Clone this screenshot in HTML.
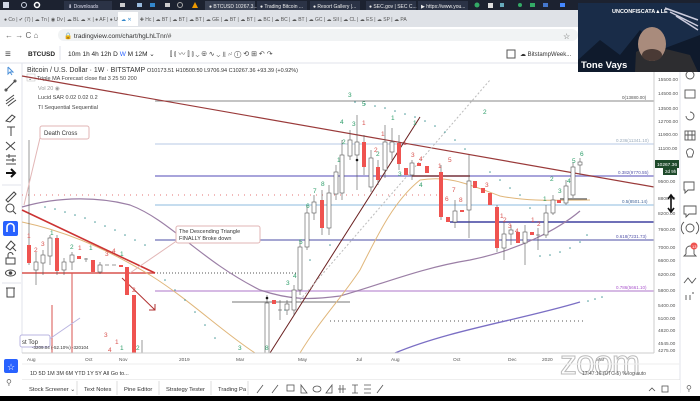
<!DOCTYPE html>
<html><head><meta charset="utf-8"><style>
html,body{margin:0;padding:0;width:700px;height:401px;overflow:hidden;background:#fff;font-family:"Liberation Sans",sans-serif}
svg{display:block}
text{font-family:"Liberation Sans",sans-serif}
</style></head><body>
<svg width="700" height="401" viewBox="0 0 700 401" xmlns="http://www.w3.org/2000/svg">
<!-- taskbar -->
<rect x="0" y="0" width="700" height="10" fill="#1c2230"/>
<rect x="3" y="2" width="6" height="6" fill="#cfd6e4"/>
<circle cx="24" cy="5" r="2.5" fill="none" stroke="#cfd6e4"/>
<circle cx="37" cy="5" r="2.5" fill="none" stroke="#fff" stroke-width="1.5"/>
<rect x="64" y="1" width="48" height="9" fill="#2b3346"/><text x="68" y="8" font-size="5" fill="#dde">⬇ Downloads</text>
<rect x="120" y="3" width="5" height="4" fill="#ccc"/><rect x="137" y="3" width="5" height="4" fill="#9bd"/><rect x="150" y="3" width="5" height="4" fill="#38c"/><rect x="165" y="3" width="5" height="4" fill="#ccc"/><circle cx="180" cy="5" r="2.5" fill="none" stroke="#aaa"/><path d="M192 8 L195 2 L198 8Z" fill="#e90"/>
<rect x="205" y="1" width="50" height="9" fill="#3a4254"/><text x="209" y="8" font-size="5" fill="#eee">● BTCUSD 10267.3...</text>
<rect x="257" y="1" width="50" height="9" fill="#2b3346"/><text x="260" y="8" font-size="5" fill="#eee">● Trading Bitcoin ...</text>
<rect x="310" y="1" width="50" height="9" fill="#2b3346"/><text x="313" y="8" font-size="5" fill="#eee">● Resort Gallery |...</text>
<rect x="366" y="1" width="50" height="9" fill="#2b3346"/><text x="369" y="8" font-size="5" fill="#eee">● SEC.gov | SEC C...</text>
<rect x="418" y="1" width="50" height="9" fill="#2b3346"/><text x="421" y="8" font-size="5" fill="#eee">▶ https://www.you...</text>
<circle cx="477" cy="5" r="2.5" fill="#3a6"/><rect x="488" y="3" width="5" height="5" fill="#ddd"/><rect x="500" y="3" width="4" height="4" fill="#6ab"/><circle cx="520" cy="5" r="2" fill="#3a6"/><rect x="530" y="3" width="5" height="4" fill="#3a6"/><rect x="543" y="3" width="5" height="4" fill="#47c"/><rect x="560" y="3" width="5" height="4" fill="#48f"/>
<!-- tab bar -->
<rect x="0" y="10" width="700" height="17" fill="#dfe2e7"/>
<g font-size="5" fill="#555">
<text x="4" y="21">● Co | ✔ (7) | ☁ Tn | ◉ Dv | ☁ BL  ☁ ✕ | ● AF | ● Un | ◢ Th | ✚ Hc | ☁ BT | ☁ BT | ☁ BT | ☁ GE | ☁ BT | ☁ BT | ☁ BC | ☁ BC | ☁ BT | ☁ GC | ☁ SII | ☁ CL | ☁ ES | ☁ SP | ☁ PA</text>
</g>
<rect x="118" y="12" width="20" height="14" fill="#fff"/><text x="121" y="21" font-size="5" fill="#38c">☁ ✕</text>
<!-- address bar -->
<rect x="0" y="27" width="700" height="16" fill="#fff"/>
<text x="5" y="38" font-size="8" fill="#666">←  →  C  ⌂</text>
<rect x="58" y="29" width="520" height="12" rx="6" fill="#f1f3f4"/>
<text x="64" y="38" font-size="6.5" fill="#333">🔒 tradingview.com/chart/hgLhLTnr/#</text>
<text x="563" y="39" font-size="8" fill="#555">☆</text>
<!-- TV toolbar -->
<rect x="0" y="43" width="700" height="20" fill="#fff"/>
<line x1="0" y1="63" x2="700" y2="63" stroke="#e0e3eb"/>
<text x="5" y="57" font-size="10" fill="#444">≡</text>
<text x="28" y="56" font-size="6.5" font-weight="bold" fill="#222">BTCUSD</text>
<line x1="60" y1="46" x2="60" y2="60" stroke="#e0e3eb"/>
<text x="68" y="56" font-size="6.5" fill="#222">10m  1h  4h  12h  D  <tspan fill="#2962ff">W</tspan>  M  12M  ⌄</text>
<text x="170" y="56" font-size="7" fill="#444">⫿  ⫾  〰  ⫿  ⫾ ⌄  ⊕  ∿ ⌄  ⫫  ⩫  ⓘ  ⟲  ⊞  ↶ ↷</text>
<rect x="507" y="50" width="8" height="8" fill="none" stroke="#555"/>
<text x="520" y="56" font-size="6" fill="#333">☁ BitstampWeek...</text>
<!-- left toolbar -->
<line x1="22" y1="63" x2="22" y2="353" stroke="#e0e3eb"/>
<g fill="none" stroke="#444" stroke-width="1">
<path d="M8 67 L8 74 L10 72 L12 75 M8 67 L13 72 L10 72" stroke="#4a8fd8"/>
<path d="M6 90 L15 81"/><circle cx="6" cy="90" r="1"/><circle cx="15" cy="81" r="1"/>
<path d="M6 104 L14 98 M6 101 L14 95 M8 106 L16 100"/>
<path d="M6 121 L12 115 L15 117 L10 122Z"/>
<path d="M7 127 L15 127 M11 127 L11 136"/>
<path d="M6 142 L15 150 M6 150 L15 142"/>
<path d="M6 156 L16 156 M6 160 L16 160 M6 164 L16 164 M9 154 L9 158 M13 158 L13 162"/>
<path d="M6 173 L15 173 M11 169 L15 173 L11 177" stroke="#111" stroke-width="2"/>
<line x1="2" y1="185" x2="21" y2="185" stroke="#e0e3eb"/>
<path d="M6 200 L14 192 L16 194 L8 202Z"/>
<circle cx="10" cy="208" r="4"/><path d="M13 211 L16 214"/>
</g>
<rect x="3" y="221" width="15" height="15" rx="2" fill="#2962ff"/>
<path d="M7 232 L7 227 A3.5 3.5 0 0 1 14 227 L14 232" fill="none" stroke="#fff" stroke-width="1.6"/>
<g fill="none" stroke="#444">
<path d="M6 247 L11 241 L15 245 L10 250Z M12 247 L16 251"/>
<rect x="6" y="258" width="9" height="6"/><path d="M8 258 L8 255 A2.5 2.5 0 0 1 13 255"/>
<ellipse cx="10.5" cy="273" rx="5" ry="3"/><circle cx="10.5" cy="273" r="1.3" fill="#444"/>
<line x1="2" y1="283" x2="21" y2="283" stroke="#e0e3eb"/>
<rect x="7" y="288" width="7" height="9"/><path d="M6 288 L15 288"/>
</g>
<!-- chart header -->
<text x="27" y="72" font-size="7" fill="#333">Bitcoin / U.S. Dollar · 1W · BITSTAMP  <tspan font-size="5.5">O10173.51  H10500.50  L9706.94  C10267.36  +93.39 (+0.92%)</tspan></text>
<rect x="27" y="74" width="8" height="7" fill="#fff" stroke="#bbb" stroke-width=".5"/>
<text x="28" y="80" font-size="5" fill="#444">⌄</text>
<text x="37" y="80" font-size="5.5" fill="#444">Triple MA Forecast close flat 3 25 50 200</text>
<text x="38" y="90" font-size="5.5" fill="#999">Vol 20  ◉</text>
<text x="38" y="99" font-size="5.5" fill="#444">Lucid SAR 0.02 0.02 0.2</text>
<text x="38" y="109" font-size="5.5" fill="#444">TI Sequential Sequential</text>
<!-- horizontal levels -->
<line x1="155" y1="101" x2="654" y2="101" stroke="#888" stroke-width="1"/>
<text x="622" y="99" font-size="4.5" fill="#555">0(13880.00)</text>
<line x1="155" y1="144" x2="654" y2="144" stroke="#b7c9e6" stroke-width="1"/>
<text x="616" y="142" font-size="4.5" fill="#9ab">0.236(11341.10)</text>
<line x1="155" y1="176" x2="654" y2="176" stroke="#8c86cf" stroke-width="1.5"/>
<text x="618" y="174" font-size="4.5" fill="#55a">0.382(9770.55)</text>
<line x1="155" y1="205" x2="654" y2="205" stroke="#8cbbdf" stroke-width="1"/>
<text x="622" y="203" font-size="4.5" fill="#469">0.5(8501.14)</text>
<line x1="450" y1="222" x2="654" y2="222" stroke="#6f70b8" stroke-width="2"/>
<line x1="155" y1="240" x2="654" y2="240" stroke="#6f70b8" stroke-width="1.2"/>
<text x="616" y="238" font-size="4.5" fill="#55a">0.618(7231.73)</text>
<line x1="155" y1="291" x2="654" y2="291" stroke="#c9a3db" stroke-width="1.5"/>
<text x="616" y="289" font-size="4.5" fill="#a5c">0.786(5661.10)</text>
<line x1="22" y1="195" x2="440" y2="195" stroke="#e57373" stroke-dasharray="1 5"/>
<line x1="22" y1="273" x2="300" y2="273" stroke="#555" stroke-dasharray="1 2"/>
<line x1="22" y1="273" x2="155" y2="273" stroke="#d9534f" stroke-width="1.5"/>
<line x1="330" y1="321" x2="585" y2="321" stroke="#555" stroke-dasharray="1 3"/>
<line x1="232" y1="302" x2="350" y2="302" stroke="#777"/>
<line x1="412" y1="176" x2="470" y2="176" stroke="#8a4444" stroke-width="1.5"/>
<line x1="560" y1="199" x2="587" y2="199" stroke="#555" stroke-width="1.2"/>
<!-- moving averages -->
<path d="M22 207 C60 196 100 197 130 205 C170 220 200 260 260 290 C290 300 310 300 340 296 C380 285 420 268 470 260 C520 250 560 228 580 211" fill="none" stroke="#9b7fa6" stroke-width="1.2"/>
<path d="M22 222 C60 230 100 245 150 275 C190 300 220 330 255 353" fill="none" stroke="#e0b67a" stroke-width="1"/>
<path d="M300 353 C320 320 340 300 360 270 C380 230 395 200 420 180 C450 175 470 185 500 196 C530 202 560 200 590 200" fill="none" stroke="#e0b67a" stroke-width="1"/>
<path d="M395 353 C450 330 520 320 580 302" fill="none" stroke="#7b6fc4" stroke-width="1.3"/>
<!-- trendlines -->
<line x1="22" y1="76" x2="654" y2="187" stroke="#9a3a3a" stroke-width="1.2"/>
<line x1="22" y1="210" x2="155" y2="273" stroke="#cc3333" stroke-width="1.6"/>
<line x1="270" y1="353" x2="420" y2="117" stroke="#6a2020" stroke-width="1"/>
<line x1="300" y1="300" x2="490" y2="80" stroke="#bbb" stroke-dasharray="2 2"/>
<line x1="122" y1="278" x2="155" y2="310" stroke="#b03030" stroke-width="1"/>
<path d="M149 310 L155 310 L155 304" fill="none" stroke="#b03030"/>
<line x1="72" y1="273" x2="72" y2="353" stroke="#d9534f"/>
<line x1="52" y1="305" x2="52" y2="353" stroke="#d9534f"/>
<!-- SAR dots -->
<g fill="#4a9a9a">
<circle cx="45" cy="207" r=".8"/><circle cx="55" cy="209" r=".8"/><circle cx="65" cy="212" r=".8"/><circle cx="75" cy="215" r=".8"/><circle cx="85" cy="218" r=".8"/><circle cx="95" cy="222" r=".8"/><circle cx="105" cy="226" r=".8"/><circle cx="115" cy="230" r=".8"/><circle cx="125" cy="235" r=".8"/><circle cx="135" cy="240" r=".8"/><circle cx="145" cy="245" r=".8"/>
<circle cx="165" cy="280" r=".8"/><circle cx="175" cy="290" r=".8"/><circle cx="185" cy="300" r=".8"/><circle cx="195" cy="312" r=".8"/><circle cx="205" cy="325" r=".8"/><circle cx="215" cy="338" r=".8"/>
<circle cx="355" cy="102" r=".8"/><circle cx="365" cy="104" r=".8"/><circle cx="375" cy="106" r=".8"/><circle cx="385" cy="108" r=".8"/><circle cx="395" cy="111" r=".8"/><circle cx="405" cy="114" r=".8"/><circle cx="415" cy="117" r=".8"/><circle cx="425" cy="121" r=".8"/><circle cx="435" cy="126" r=".8"/><circle cx="445" cy="132" r=".8"/><circle cx="455" cy="140" r=".8"/><circle cx="465" cy="149" r=".8"/>
<circle cx="490" cy="172" r=".8"/><circle cx="500" cy="180" r=".8"/><circle cx="510" cy="188" r=".8"/><circle cx="520" cy="195" r=".8"/>
<circle cx="530" cy="208" r=".8"/><circle cx="540" cy="256" r=".8"/><circle cx="550" cy="255" r=".8"/><circle cx="560" cy="252" r=".8"/><circle cx="570" cy="248" r=".8"/><circle cx="580" cy="242" r=".8"/><circle cx="587" cy="235" r=".8"/>
<circle cx="588" cy="301" r=".8"/><circle cx="595" cy="299" r=".8"/><circle cx="602" cy="297" r=".8"/>
<circle cx="285" cy="310" r=".8"/><circle cx="300" cy="280" r=".8"/><circle cx="310" cy="260" r=".8"/><circle cx="330" cy="245" r=".8"/>
</g>
<!-- candles -->
<g stroke="#555" stroke-width=".6">
<!-- red helper: fill #ef5350 -->
<line x1="29" y1="140" x2="29" y2="265"/><rect x="27" y="245" width="4" height="18" fill="#ef5350" stroke="none"/>
<line x1="36" y1="252" x2="36" y2="285"/><rect x="34" y="262" width="4" height="8" fill="#fff"/>
<line x1="43" y1="250" x2="43" y2="275"/><rect x="41" y="255" width="4" height="8" fill="#fff"/>
<line x1="50" y1="235" x2="50" y2="265"/><rect x="48" y="238" width="4" height="18" fill="#fff"/>
<line x1="57" y1="235" x2="57" y2="275"/><rect x="55" y="238" width="4" height="33" fill="#ef5350" stroke="none"/>
<line x1="64" y1="258" x2="64" y2="275"/><rect x="62" y="262" width="4" height="8" fill="#fff"/>
<line x1="72" y1="252" x2="72" y2="270"/><rect x="70" y="255" width="4" height="7" fill="#fff"/>
<rect x="77" y="256" width="4" height="3" fill="#ef5350" stroke="none"/>
<line x1="86" y1="258" x2="86" y2="262"/><line x1="84" y1="259" x2="88" y2="259"/>
<rect x="91" y="260" width="4" height="12" fill="#ef5350" stroke="none"/>
<line x1="100" y1="262" x2="100" y2="274"/><rect x="98" y="265" width="4" height="7" fill="#fff"/>
<line x1="105" y1="265" x2="109" y2="265"/><line x1="112" y1="265" x2="116" y2="265"/>
<rect x="119" y="265" width="4" height="2" fill="#ef5350" stroke="none"/>
<rect x="125" y="267" width="4" height="28" fill="#ef5350" stroke="none"/>
<rect x="132" y="295" width="4" height="58" fill="#ef5350" stroke="none"/>
<line x1="142" y1="340" x2="142" y2="353"/>
<!-- rally -->
<line x1="267" y1="295" x2="267" y2="353"/><rect x="265" y="303" width="4" height="50" fill="#fff"/>
<rect x="272" y="300" width="4" height="4" fill="#ef5350" stroke="none"/>
<line x1="280" y1="300" x2="280" y2="320"/><line x1="278" y1="310" x2="282" y2="310"/>
<line x1="287" y1="300" x2="287" y2="315"/><rect x="285" y="304" width="4" height="6" fill="#fff"/>
<line x1="294" y1="285" x2="294" y2="315"/><rect x="292" y="290" width="4" height="20" fill="#fff"/>
<line x1="300" y1="240" x2="300" y2="295"/><rect x="298" y="247" width="4" height="43" fill="#fff"/>
<line x1="307" y1="205" x2="307" y2="250"/><rect x="305" y="213" width="4" height="34" fill="#fff"/>
<line x1="314" y1="195" x2="314" y2="220"/><rect x="312" y="202" width="4" height="11" fill="#fff"/>
<line x1="322" y1="190" x2="322" y2="235"/><rect x="320" y="200" width="4" height="28" fill="#ef5350" stroke="none"/>
<line x1="329" y1="185" x2="329" y2="235"/><rect x="327" y="193" width="4" height="35" fill="#fff"/>
<line x1="336" y1="165" x2="336" y2="200"/><rect x="334" y="172" width="4" height="22" fill="#fff"/>
<line x1="342" y1="140" x2="342" y2="200"/><rect x="340" y="155" width="4" height="38" fill="#fff"/>
<line x1="350" y1="130" x2="350" y2="160"/><rect x="348" y="140" width="4" height="16" fill="#fff"/>
<line x1="357" y1="115" x2="357" y2="190"/><rect x="355" y="142" width="4" height="13" fill="#fff"/>
<line x1="364" y1="135" x2="364" y2="175"/><rect x="362" y="142" width="4" height="25" fill="#ef5350" stroke="none"/>
<line x1="371" y1="150" x2="371" y2="192"/><rect x="369" y="158" width="4" height="29" fill="#fff"/>
<line x1="378" y1="160" x2="378" y2="185"/><rect x="376" y="167" width="4" height="13" fill="#ef5350" stroke="none"/>
<line x1="385" y1="125" x2="385" y2="178"/><rect x="383" y="142" width="4" height="28" fill="#fff"/>
<line x1="392" y1="128" x2="392" y2="160"/><rect x="390" y="142" width="4" height="10" fill="#fff"/>
<line x1="399" y1="135" x2="399" y2="170"/><rect x="397" y="143" width="4" height="21" fill="#ef5350" stroke="none"/>
<rect x="404" y="168" width="4" height="7" fill="#ef5350" stroke="none"/>
<line x1="412" y1="160" x2="412" y2="180"/><rect x="410" y="163" width="4" height="12" fill="#fff"/>
<rect x="417" y="163" width="4" height="3" fill="#ef5350" stroke="none"/>
<rect x="425" y="166" width="4" height="7" fill="#ef5350" stroke="none"/>
<line x1="441" y1="165" x2="441" y2="220"/><rect x="439" y="172" width="4" height="45" fill="#ef5350" stroke="none"/>
<rect x="446" y="217" width="4" height="5" fill="#ef5350" stroke="none"/>
<line x1="455" y1="200" x2="455" y2="228"/><rect x="453" y="211" width="4" height="11" fill="#fff"/>
<rect x="460" y="210" width="4" height="2" fill="#ef5350" stroke="none"/>
<line x1="469" y1="155" x2="469" y2="238"/><rect x="467" y="181" width="4" height="29" fill="#fff"/>
<rect x="473" y="181" width="4" height="7" fill="#ef5350" stroke="none"/>
<rect x="481" y="188" width="4" height="5" fill="#ef5350" stroke="none"/>
<rect x="488" y="193" width="4" height="12" fill="#ef5350" stroke="none"/>
<line x1="497" y1="205" x2="497" y2="252"/><rect x="495" y="207" width="4" height="41" fill="#ef5350" stroke="none"/>
<line x1="504" y1="222" x2="504" y2="260"/><rect x="502" y="234" width="4" height="14" fill="#fff"/>
<line x1="511" y1="225" x2="511" y2="245"/><rect x="509" y="230" width="4" height="4" fill="#fff"/>
<rect x="516" y="232" width="4" height="11" fill="#ef5350" stroke="none"/>
<line x1="525" y1="225" x2="525" y2="265"/><rect x="523" y="232" width="4" height="11" fill="#fff"/>
<rect x="530" y="232" width="4" height="3" fill="#ef5350" stroke="none"/>
<line x1="538" y1="228" x2="538" y2="250"/><line x1="536" y1="235" x2="540" y2="235"/>
<line x1="546" y1="205" x2="546" y2="238"/><rect x="544" y="213" width="4" height="22" fill="#fff"/>
<line x1="553" y1="195" x2="553" y2="215"/><rect x="551" y="200" width="4" height="13" fill="#fff"/>
<rect x="557" y="200" width="4" height="3" fill="#ef5350" stroke="none"/>
<line x1="566" y1="180" x2="566" y2="205"/><rect x="564" y="186" width="4" height="17" fill="#fff"/>
<line x1="573" y1="162" x2="573" y2="198"/><rect x="571" y="167" width="4" height="28" fill="#fff"/>
<line x1="580" y1="158" x2="580" y2="175"/><rect x="578" y="162" width="4" height="3" fill="#fff"/>
</g>
<circle cx="357" cy="160" r="1.3" fill="#111"/><circle cx="267" cy="298" r="1.3" fill="#111"/>
<!-- TD numbers -->
<g font-size="6.5" fill="#2e9e6a">
<text x="348" y="97">3</text><text x="362" y="106">5</text><text x="340" y="124">4</text><text x="391" y="120">1</text><text x="413" y="125">1</text><text x="376" y="156">2</text><text x="398" y="176">3</text><text x="419" y="187">4</text><text x="572" y="163">5</text><text x="580" y="156">6</text><text x="567" y="183">4</text><text x="550" y="181">2</text><text x="558" y="193">3</text><text x="543" y="201">1</text><text x="483" y="114">2</text><text x="352" y="126">3</text>
<text x="299" y="244">5</text><text x="306" y="208">6</text><text x="313" y="193">7</text><text x="321" y="186">8</text><text x="337" y="162">1</text><text x="342" y="144">2</text><text x="286" y="285">3</text><text x="293" y="278">4</text><text x="265" y="350">8</text><text x="238" y="350">3</text><text x="120" y="350">1</text><text x="50" y="235">1</text><text x="70" y="249">2</text><text x="89" y="250">1</text><text x="120" y="256">1</text><text x="136" y="350">2</text>
</g>
<g font-size="6.5" fill="#d9534f">
<text x="27" y="238">1</text><text x="34" y="252">2</text><text x="41" y="246">3</text><text x="78" y="250">1</text><text x="105" y="256">3</text><text x="112" y="253">4</text><text x="132" y="292">2</text><text x="104" y="337">3</text><text x="115" y="344">1</text><text x="108" y="352">4</text>
<text x="362" y="125">1</text><text x="381" y="136">1</text><text x="374" y="152">2</text><text x="403" y="145">1</text><text x="411" y="157">3</text><text x="419" y="161">4</text><text x="438" y="168">1</text><text x="448" y="162">5</text><text x="445" y="201">6</text><text x="452" y="192">7</text><text x="459" y="202">8</text><text x="485" y="187">3</text><text x="500" y="218">1</text><text x="503" y="222">2</text><text x="508" y="228">3</text><text x="515" y="233">4</text><text x="531" y="222">1</text><text x="537" y="226">2</text>
</g>
<!-- annotations -->
<path d="M24 205 L40 138" stroke="#e2b6b6" fill="none"/>
<rect x="40" y="126" width="49" height="13" rx="2" fill="#fff" stroke="#e2b6b6"/>
<text x="44" y="135" font-size="6" fill="#333">Death Cross</text>
<path d="M130 273 L178 240" stroke="#e2b6b6" fill="none"/>
<rect x="176" y="226" width="84" height="17" rx="2" fill="#fff" stroke="#e2b6b6"/>
<text x="179" y="233" font-size="5.5" fill="#333">The Descending Triangle</text>
<text x="179" y="240" font-size="5.5" fill="#333">FINALLY Broke down</text>
<path d="M48 340 L80 318" stroke="#b9b4e0" fill="none"/>
<rect x="20" y="335" width="30" height="12" rx="2" fill="#fff" stroke="#b9b4e0"/>
<text x="22" y="344" font-size="6" fill="#333">st Top</text>
<text x="32" y="349" font-size="4.5" fill="#333">-3209.04 (-52.10%) -320104</text>
<!-- price axis -->
<line x1="654" y1="63" x2="654" y2="353" stroke="#ccc"/>
<g font-size="4.8" fill="#555">
<text x="658" y="81">15500.00</text><text x="658" y="95">14500.00</text><text x="658" y="110">13500.00</text><text x="658" y="123">12700.00</text><text x="658" y="136">11900.00</text><text x="658" y="150">11100.00</text><text x="658" y="183">9500.00</text><text x="658" y="200">8800.00</text><text x="658" y="215">8200.00</text><text x="658" y="231">7600.00</text><text x="658" y="249">7000.00</text><text x="658" y="262">6600.00</text><text x="658" y="276">6200.00</text><text x="658" y="292">5800.00</text><text x="658" y="307">5400.00</text><text x="658" y="320">5100.00</text><text x="658" y="332">4820.00</text><text x="658" y="345">4545.00</text><text x="658" y="352">4275.00</text>
</g>
<rect x="655" y="160" width="24" height="8" fill="#1e4a2a"/><text x="657" y="166" font-size="4.8" fill="#fff">10267.36</text>
<rect x="663" y="168" width="14" height="7" fill="#1e4a2a"/><text x="665" y="173" font-size="4.5" fill="#fff">2d 9h</text>
<path d="M671 196 L671 211 M668 199 L671 195 L674 199 M668 208 L671 212 L674 208" stroke="#111" stroke-width="1.6" fill="none"/>
<!-- right sidebar -->
<line x1="680" y1="63" x2="680" y2="393" stroke="#e0e3eb"/>
<g fill="none" stroke="#555" stroke-width=".9">
<circle cx="690" cy="75" r="4"/>
<rect x="685" y="90" width="10" height="8"/>
<path d="M686 116 A4 4 0 1 0 690 112"/>
<rect x="685" y="131" width="10" height="9"/><path d="M688 131 L688 140 M692 131 L692 140 M685 135 L695 135"/>
<path d="M687 154 A3.5 3.5 0 1 1 693 154 L692 157 L688 157Z"/>
<path d="M684 182 L694 182 L694 190 L688 190 L685 193 L685 190 L684 190Z"/>
<path d="M684 206 L696 206 L696 214 L689 214 L686 217 L686 214 L684 214Z"/>
<circle cx="690" cy="228" r="4"/><path d="M684 222 A8 8 0 0 0 684 234 M696 222 A8 8 0 0 1 696 234"/>
<path d="M686 254 L686 250 A4 4 0 0 1 694 250 L694 254 L696 256 L684 256Z"/>
<path d="M684 283 L688 278 L692 283 L696 278"/>
<path d="M686 295 L686 300 M690 295 L690 300 M692 293 L694 293"/>
</g>
<circle cx="694" cy="246" r="3.5" fill="#ef5350"/><text x="692" y="248" font-size="4" fill="#fff">13</text>
<!-- time axis -->
<line x1="22" y1="353" x2="654" y2="353" stroke="#ccc"/>
<g font-size="4.8" fill="#555">
<text x="27" y="361">Aug</text><text x="85" y="361">Oct</text><text x="119" y="361">Nov</text><text x="179" y="361">2019</text><text x="236" y="361">Mar</text><text x="298" y="361">May</text><text x="356" y="361">Jul</text><text x="391" y="361">Aug</text><text x="453" y="361">Oct</text><text x="508" y="361">Dec</text><text x="542" y="361">2020</text><text x="596" y="361">Mar</text>
</g>
<!-- zoom watermark -->
<text x="560" y="374" font-size="34" fill="none" stroke="#bbb" stroke-width="1" font-family="Liberation Sans" letter-spacing="-1">zoom</text>
<!-- range bar -->
<line x1="22" y1="364" x2="680" y2="364" stroke="#eee"/>
<rect x="4" y="359" width="14" height="14" rx="2" fill="#2962ff"/><text x="7" y="370" font-size="9" fill="#fff">☆</text>
<text x="6" y="385" font-size="8" fill="#666">⚲</text>
<text x="30" y="375" font-size="5.5" fill="#333">1D   5D   1M   3M   6M   YTD   1Y   5Y   All      Go to...</text>
<text x="582" y="375" font-size="5" fill="#555">17:47:16 (UTC-5)    %   log   auto</text>
<!-- bottom panel -->
<line x1="22" y1="380" x2="680" y2="380" stroke="#ddd"/>
<rect x="22" y="380" width="658" height="16" fill="#fff"/>
<g font-size="5.8" fill="#333">
<text x="29" y="391">Stock Screener  ⌄</text><text x="84" y="391">Text Notes</text><text x="124" y="391">Pine Editor</text><text x="166" y="391">Strategy Tester</text><text x="218" y="391">Trading Pa</text>
</g>
<g stroke="#ddd"><line x1="77" y1="381" x2="77" y2="395"/><line x1="117" y1="381" x2="117" y2="395"/><line x1="159" y1="381" x2="159" y2="395"/><line x1="211" y1="381" x2="211" y2="395"/><line x1="248" y1="381" x2="248" y2="395"/></g>
<g fill="none" stroke="#555" stroke-width=".8">
<path d="M257 393 L263 385"/><path d="M272 393 L278 385"/><rect x="287" y="385" width="7" height="6"/><path d="M301 393 L301 385 L307 393Z"/><ellipse cx="317" cy="389" rx="4" ry="3"/><path d="M326 393 L332 385 L332 393Z"/><path d="M340 385 L340 393 M343 385 L343 393 M338 389 L346 389"/><path d="M352 385 L358 385 M355 385 L355 393 M352 393 L358 393"/><path d="M364 385 L371 385 M364 389 L371 389 M364 393 L371 393"/><path d="M377 393 L383 385"/>
<path d="M649 391 L652 388 L655 391"/><rect x="662" y="386" width="6" height="6"/>
</g>
<text x="686" y="391" font-size="8" fill="#666">⚲</text>
<rect x="0" y="396" width="700" height="5" fill="#000"/>
<!-- video overlay -->
<rect x="578" y="3" width="122" height="69" fill="#152238"/>
<rect x="578" y="3" width="122" height="69" fill="#1d3354" opacity=".6"/>
<path d="M578 60 L600 40 L620 55 L640 30 L660 50 L700 35 L700 72 L578 72Z" fill="#0f1a2c"/>
<path d="M665 8 L698 20 M670 12 L698 26 M676 16 L698 30" stroke="#ccd" stroke-width="1.5"/>
<text x="612" y="13" font-size="5.5" font-weight="bold" fill="#fff">UNCONFISCATA▲LE</text>
<path d="M635 72 L636 52 Q645 45 670 50 L690 55 L698 72Z" fill="#2d2d30"/>
<ellipse cx="652" cy="44" rx="14" ry="17" fill="#a98b7c"/>
<ellipse cx="652" cy="55" rx="10" ry="6" fill="#4a3a35"/>
<text x="581" y="68" font-size="9.5" font-weight="bold" fill="#fff">Tone Vays</text>
</svg>
</body></html>
